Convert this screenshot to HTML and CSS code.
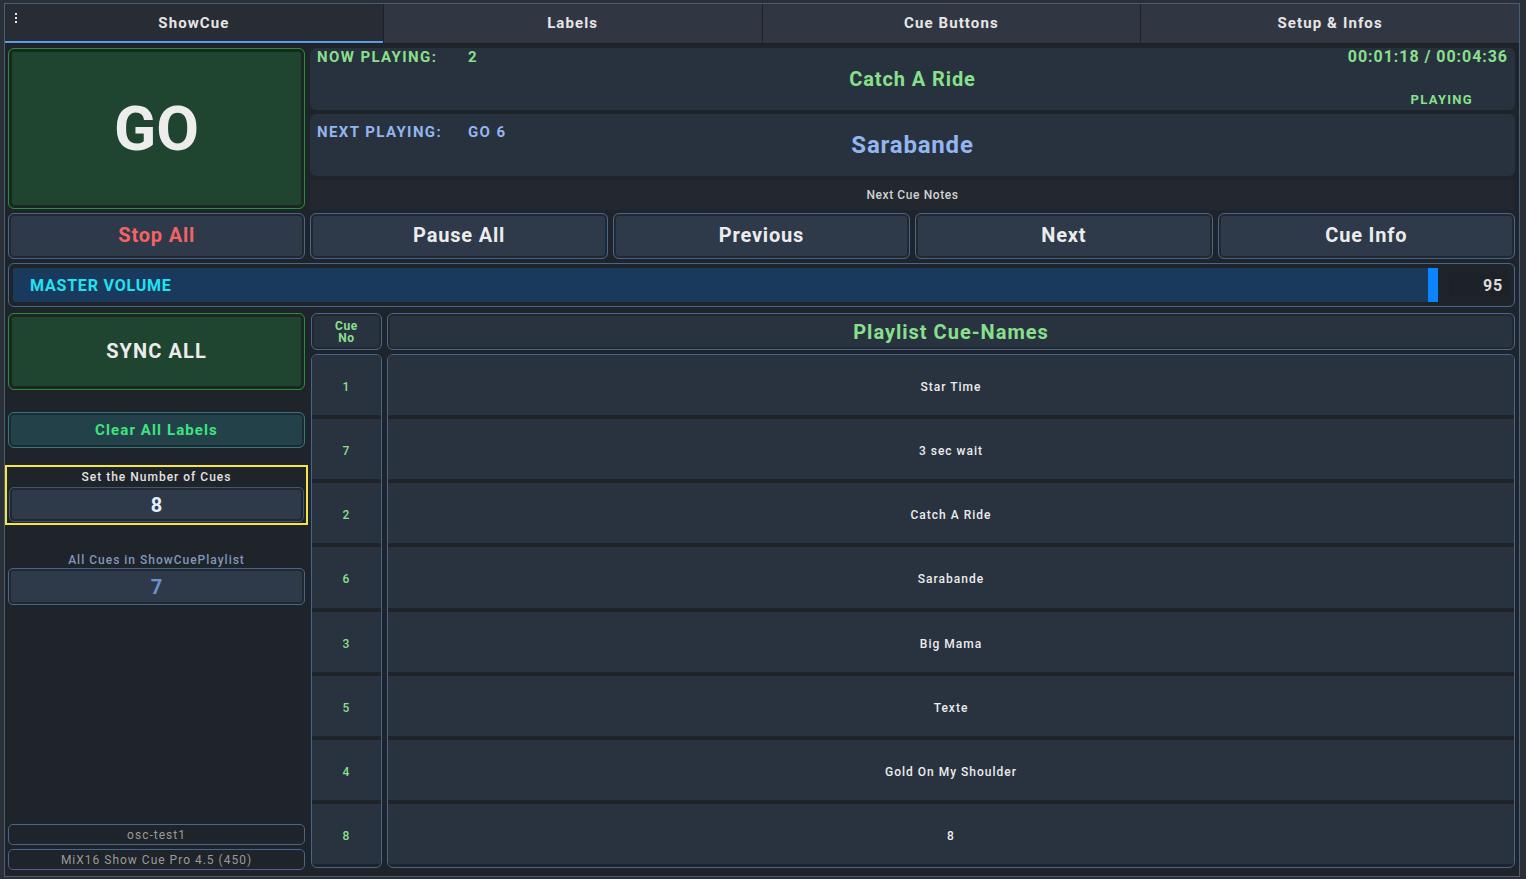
FILE: index.html
```html
<!DOCTYPE html>
<html lang="en">
<head>
<meta charset="utf-8">
<title>ShowCue</title>
<link rel="stylesheet" href="styles.css">
</head>
<body>
<div class="app">
  <nav class="tabs">
    <svg class="menu-dots" width="4" height="12" viewBox="0 0 4 12" aria-hidden="true">
      <rect x="1" y="0" width="2" height="2" fill="#e8e8e8"/>
      <rect x="1" y="4" width="2" height="2" fill="#e8e8e8"/>
      <rect x="1" y="8" width="2" height="2" fill="#e8e8e8"/>
    </svg>
    <div class="tab active">ShowCue</div>
    <div class="tab">Labels</div>
    <div class="tab">Cue Buttons</div>
    <div class="tab">Setup &amp; Infos</div>
  </nav>
  <main class="content">
    <section class="top">
      <div class="go">GO</div>
      <div class="info">
        <div class="panel now">
          <div class="p-label">NOW PLAYING:</div>
          <div class="p-num">2</div>
          <div class="p-title">Catch A Ride</div>
          <div class="p-time">00:01:18 / 00:04:36</div>
          <div class="p-status">PLAYING</div>
        </div>
        <div class="panel next">
          <div class="p-label">NEXT PLAYING:</div>
          <div class="p-num">GO 6</div>
          <div class="p-title">Sarabande</div>
        </div>
        <div class="notes">Next Cue Notes</div>
      </div>
    </section>
    <section class="transport">
      <div class="btn stop">Stop All</div>
      <div class="btn">Pause All</div>
      <div class="btn">Previous</div>
      <div class="btn">Next</div>
      <div class="btn">Cue Info</div>
    </section>
    <section class="volume">
      <div class="vol-fill" style="width: 94.6%">MASTER VOLUME</div>
      <div class="vol-handle"></div>
      <div class="vol-rest"><div class="vol-value">95</div></div>
    </section>
    <section class="bottom">
      <aside class="side">
        <div class="sync">SYNC ALL</div>
        <div class="clear">Clear All Labels</div>
        <div class="cues-set">
          <div class="cues-label">Set the Number of Cues</div>
          <div class="field">8</div>
        </div>
        <div class="all-label">All Cues in ShowCuePlaylist</div>
        <div class="all-field">7</div>
        <div class="spacer"></div>
        <div class="meta">osc-test1</div>
        <div class="meta meta-2">MiX16 Show Cue Pro 4.5 (450)</div>
      </aside>
      <div class="table">
        <div class="th th-no"><span>Cue</span><span>No</span></div>
        <div class="th th-name">Playlist Cue-Names</div>
        <div class="col col-no">
          <div class="cell">1</div>
          <div class="cell">7</div>
          <div class="cell">2</div>
          <div class="cell">6</div>
          <div class="cell">3</div>
          <div class="cell">5</div>
          <div class="cell">4</div>
          <div class="cell">8</div>
        </div>
        <div class="col col-name">
          <div class="cell">Star Time</div>
          <div class="cell">3 sec wait</div>
          <div class="cell">Catch A Ride</div>
          <div class="cell">Sarabande</div>
          <div class="cell">Big Mama</div>
          <div class="cell">Texte</div>
          <div class="cell">Gold On My Shoulder</div>
          <div class="cell">8</div>
        </div>
      </div>
    </section>
  </main>
</div>
</body>
</html>
```

FILE: styles.css
```css
html, body {
  margin: 0;
  padding: 0;
}
body {
  background: #2b2f37;
  font-family: Roboto, "Liberation Sans", sans-serif;
  color: #ececec;
}
.app {
  margin: 3px 0 0 4px;
  width: 1516px;
  height: 874px;
  box-sizing: border-box;
  border: 1px solid #475e79;
  background: #1f232a;
  display: flex;
  flex-direction: column;
  position: relative;
}

/* tabs */
.tabs {
  display: flex;
  height: 40px;
  padding-bottom: 1px;
  box-sizing: border-box;
  background: #1d2127;
  position: relative;
}
.menu-dots {
  position: absolute;
  left: 9px;
  top: 9px;
}
.tab {
  flex: 1;
  display: flex;
  align-items: center;
  justify-content: center;
  background: #313742;
  color: #e6e6e6;
  font-weight: 700;
  font-size: 15px;
  letter-spacing: 1.1px;
  padding-bottom: 2px;
  border-left: 1px solid #1d2127;
}
.tab.active {
  border-left: 0;
  background: #282c35;
  box-shadow: inset 0 -2px 0 #5b9be8;
}

/* content */
.content {
  flex: 1;
  display: flex;
  flex-direction: column;
  padding: 4px 4px 6px 3px;
  min-height: 0;
}

.top {
  display: grid;
  grid-template-columns: 297px 1fr;
  column-gap: 5px;
  height: 162px;
}
.go {
  height: 161px;
  box-sizing: border-box;
  border: 1px solid #2b8d3b;
  border-radius: 6px;
  background: #1f4530;
  box-shadow: inset 0 0 0 3px #1b2722;
  display: flex;
  align-items: center;
  justify-content: center;
  color: #ededed;
  font-size: 62px;
  font-weight: 700;
}
.info {
  display: flex;
  flex-direction: column;
  gap: 4px;
}
.panel {
  height: 62px;
  box-sizing: border-box;
  border-radius: 6px;
  background: #28313e;
  display: grid;
  grid-template-columns: 151px 1fr auto;
  grid-template-rows: 1fr;
  padding: 0 7px;
  font-weight: 700;
}
.now { color: #88e08c; }
.next { color: #94b5f0; }
.p-label, .p-num {
  grid-row: 1;
  align-self: start;
  font-size: 15px;
  line-height: 18px;
  letter-spacing: 1.4px;
}
.p-label { grid-column: 1; }
.p-num { grid-column: 2; justify-self: start; }
.next .p-label, .next .p-num { margin-top: 9px; }
.p-title {
  grid-column: 1 / -1;
  grid-row: 1;
  align-self: center;
  justify-self: center;
  font-size: 20px;
  letter-spacing: 0.9px;
}
.next .p-title { font-size: 24px; letter-spacing: 0.8px; }
.p-time {
  grid-column: 3;
  grid-row: 1;
  align-self: start;
  font-size: 16px;
  line-height: 18px;
  letter-spacing: 0.95px;
}
.p-status {
  grid-column: 3;
  grid-row: 1;
  align-self: end;
  justify-self: end;
  margin: 0 35px 2px 0;
  font-size: 13px;
  line-height: 16px;
  letter-spacing: 1.3px;
}
.notes {
  flex: 1;
  background: #232830;
  border-radius: 4px 4px 0 0;
  display: flex;
  align-items: center;
  justify-content: center;
  font-size: 12px;
  font-weight: 500;
  color: #d2d2d2;
  letter-spacing: 0.6px;
}

/* transport buttons */
.transport {
  display: grid;
  grid-template-columns: repeat(5, 1fr);
  gap: 5px;
  height: 46px;
  margin-top: 3px;
}
.btn {
  border: 1px solid #46678d;
  border-radius: 6px;
  background: #2e3949;
  box-shadow: inset 0 0 0 2px #222831;
  display: flex;
  align-items: center;
  justify-content: center;
  padding-bottom: 2px;
  font-size: 20px;
  font-weight: 700;
  color: #ececec;
  letter-spacing: 0.8px;
}
.btn.stop { color: #f26464; }

/* volume */
.volume {
  margin-top: 4px;
  height: 44px;
  box-sizing: border-box;
  border: 1px solid #46678d;
  border-radius: 6px;
  padding: 4px 5px 4px 4px;
  display: flex;
  background: #1f242b;
}
.vol-fill {
  background: #193a5d;
  display: flex;
  align-items: center;
  padding-left: 17px;
  box-sizing: border-box;
  color: #22e2f2;
  font-weight: 700;
  font-size: 16px;
  letter-spacing: 0.8px;
  border-radius: 2px 0 0 2px;
}
.vol-handle {
  width: 10px;
  background: #0a84ff;
}
.vol-rest {
  flex: 1;
  display: flex;
  justify-content: flex-end;
  align-items: center;
}
.vol-value {
  width: 60px;
  height: 24px;
  box-sizing: border-box;
  background: #1d2128;
  display: flex;
  align-items: center;
  justify-content: flex-end;
  padding-right: 6px;
  font-size: 16px;
  font-weight: 700;
  color: #dcdcdc;
  letter-spacing: 0.8px;
}

/* bottom */
.bottom {
  margin-top: 6px;
  flex: 1;
  display: grid;
  grid-template-columns: 297px 1fr;
  column-gap: 6px;
  min-height: 0;
}
.side {
  display: flex;
  flex-direction: column;
}
.sync {
  height: 77px;
  box-sizing: border-box;
  border: 1px solid #2b8d3b;
  border-radius: 6px;
  background: #1f4530;
  box-shadow: inset 0 0 0 3px #1b2722;
  display: flex;
  align-items: center;
  justify-content: center;
  padding-bottom: 1px;
  color: #ececec;
  font-size: 20px;
  font-weight: 700;
  letter-spacing: 1.1px;
}
.clear {
  margin-top: 22px;
  height: 36px;
  box-sizing: border-box;
  border: 1px solid #32787f;
  border-radius: 6px;
  background: #234149;
  box-shadow: inset 0 0 0 2px #1e2a30;
  display: flex;
  align-items: center;
  justify-content: center;
  color: #40e47f;
  font-size: 15px;
  font-weight: 700;
  letter-spacing: 1.1px;
}
.cues-set {
  margin: 17px -3px 0;
  height: 60px;
  box-sizing: border-box;
  border: 2px solid #f3e546;
  padding: 0 2px 1px;
  display: flex;
  flex-direction: column;
}
.cues-label {
  height: 20px;
  line-height: 21px;
  text-align: center;
  font-size: 12px;
  font-weight: 500;
  color: #e2e2e2;
  letter-spacing: 1px;
}
.field, .all-field {
  box-sizing: border-box;
  border: 1px solid #3f5874;
  border-radius: 5px;
  background: #2e3949;
  box-shadow: inset 0 0 0 2px #222831;
  display: flex;
  align-items: center;
  justify-content: center;
  font-size: 20px;
  font-weight: 700;
}
.field {
  flex: 1;
  color: #e4eefc;
}
.all-label {
  margin-top: 27px;
  height: 16px;
  line-height: 17px;
  text-align: center;
  font-size: 12px;
  font-weight: 500;
  color: #8197b8;
  letter-spacing: 1px;
}
.all-field {
  height: 37px;
  border-color: #46678d;
  color: #6f91c9;
}
.spacer { flex: 1; }
.meta {
  height: 21px;
  box-sizing: border-box;
  border: 1px solid #46678d;
  border-radius: 5px;
  display: flex;
  align-items: center;
  justify-content: center;
  font-size: 12px;
  color: #9a9a9a;
  letter-spacing: 1px;
}
.meta-2 { margin-top: 4px; }

/* table */
.table {
  display: grid;
  grid-template-columns: 71px 1fr;
  grid-template-rows: 37px 1fr;
  gap: 4px 5px;
  padding-bottom: 2px;
  min-height: 0;
}
.th {
  border: 1px solid #46678d;
  border-radius: 6px;
  background: #29323f;
  box-shadow: inset 0 0 0 2px #222831;
  color: #88e08c;
  font-weight: 700;
  display: flex;
  align-items: center;
  justify-content: center;
}
.th-no {
  flex-direction: column;
  font-size: 12px;
  line-height: 12px;
  letter-spacing: 0.6px;
}
.th-name {
  font-size: 20px;
  letter-spacing: 1px;
}
.col {
  border: 1px solid #46678d;
  border-radius: 6px;
  overflow: hidden;
  background: #1f232a;
  display: flex;
  flex-direction: column;
  gap: 4px;
  padding-bottom: 3px;
}
.cell {
  flex: 1;
  background: #29323f;
  display: flex;
  align-items: center;
  justify-content: center;
  padding-top: 4px;
  font-size: 12px;
  font-weight: 500;
  letter-spacing: 1px;
  color: #ececec;
}
.col-no .cell { color: #88e08c; }
```
